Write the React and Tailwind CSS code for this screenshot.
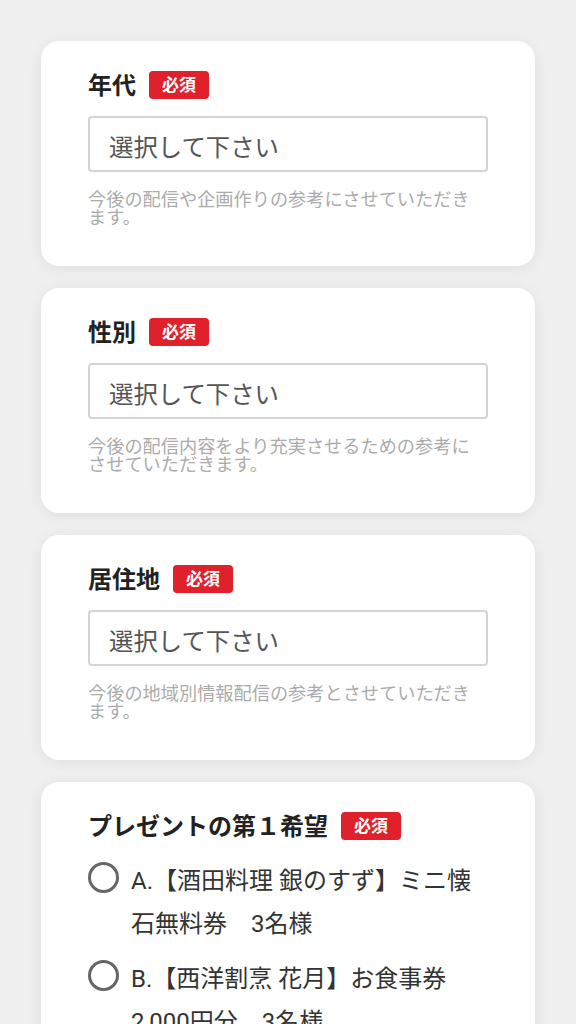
import React from "react";

const FONT = { fontFamily: 'Roboto, "Noto Sans CJK JP", "Noto Sans", sans-serif' };

function Badge() {
  return (
    <span className="inline-flex h-[28px] w-[60px] items-center justify-center rounded-[4px] bg-[#e0202a] text-[17px] font-bold leading-none text-white">
      必須
    </span>
  );
}

function Header({ label }) {
  return (
    <div className="flex h-[28px] items-center gap-[13px]">
      <span className="pt-[2px] text-[24px] font-bold leading-[28px] text-[#222]">{label}</span>
      <Badge />
    </div>
  );
}

function SelectCard({ label, help }) {
  return (
    <div className="rounded-[18px] bg-white px-[47px] pb-[39px] pt-[30px] shadow-[0_2px_14px_rgba(0,0,0,0.07)]">
      <Header label={label} />
      <div className="mt-[17px] flex h-[56px] items-center rounded-[4px] border-2 border-[#d4d4d4] px-[19px] pt-[8px] text-[24.4px] text-[#555]">
        選択して下さい
      </div>
      <p className="mt-[19px] text-[18.2px] leading-[18px] text-[#ababab]">
        {help[0]}
        <br />
        {help[1]}
      </p>
    </div>
  );
}

function Option({ lines }) {
  return (
    <div className="flex items-start gap-[12px]">
      <span className="mt-[2px] h-[31px] w-[31px] shrink-0 rounded-full border-[3px] border-[#666]" />
      <span className="text-[24px] leading-[43px] text-[#333]">
        {lines[0]}
        <br />
        {lines[1]}
      </span>
    </div>
  );
}

export default function App() {
  return (
    <div className="min-h-[1024px] bg-[#efefef] px-[41px] pt-[41px]" style={FONT}>
      <div className="flex flex-col gap-[22px]">
        <SelectCard
          label="年代"
          help={["今後の配信や企画作りの参考にさせていただき", "ます。"]}
        />
        <SelectCard
          label="性別"
          help={["今後の配信内容をより充実させるための参考に", "させていただきます。"]}
        />
        <SelectCard
          label="居住地"
          help={["今後の地域別情報配信の参考とさせていただき", "ます。"]}
        />
        <div className="rounded-[18px] bg-white px-[47px] pb-[42px] pt-[30px] shadow-[0_2px_14px_rgba(0,0,0,0.07)]">
          <Header label="プレゼントの第１希望" />
          <div className="mt-[20px] flex flex-col gap-[12px]">
            <Option lines={["A.【酒田料理 銀のすず】ミニ懐", "石無料券　3名様"]} />
            <Option lines={["B.【西洋割烹 花月】お食事券", "2,000円分　3名様"]} />
          </div>
        </div>
      </div>
    </div>
  );
}
